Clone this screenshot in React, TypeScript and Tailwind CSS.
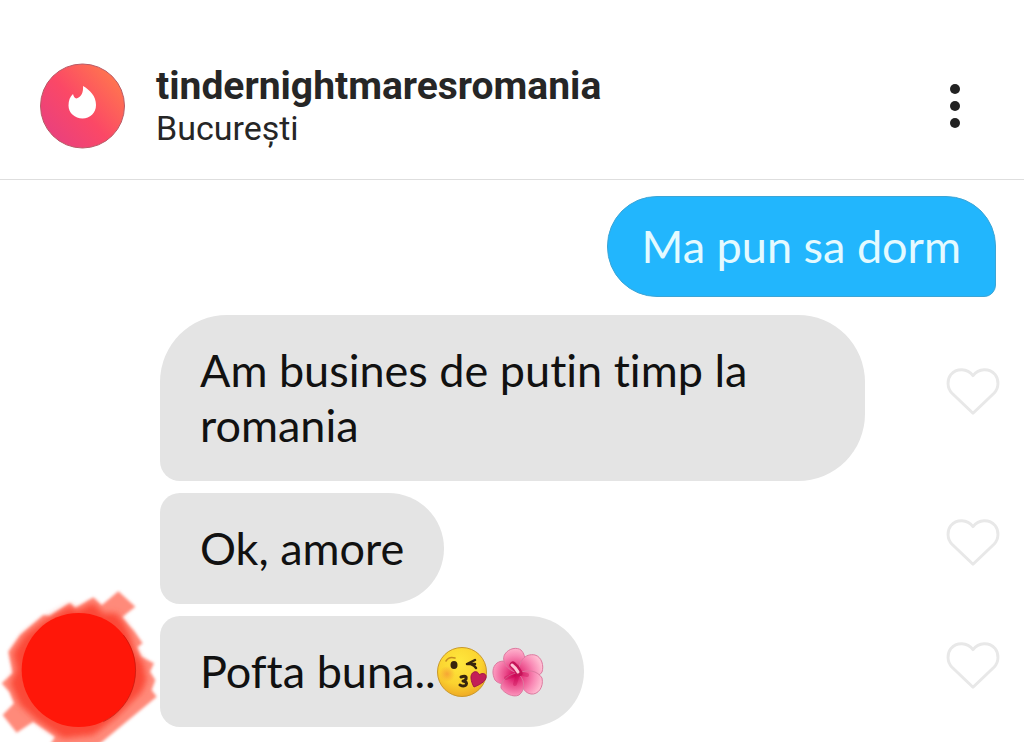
import type { ReactNode } from "react"

const messages = [
  { id: 1, text: "Am busines de putin timp la romania", shape: "rounded-[67px] rounded-bl-[20px] pl-10 pr-20 py-7" },
  { id: 2, text: "Ok, amore", shape: "rounded-l-[20px] rounded-r-[56px] px-10 py-7" },
  { id: 3, text: "Pofta buna..", shape: "rounded-l-[20px] rounded-r-[56px] px-10 py-7", emojis: true },
]

function TinderLogo() {
  return (
    <svg viewBox="0 0 86 86" className="size-[86px] shrink-0" aria-hidden="true">
      <defs>
        <linearGradient id="logo" x1="0.1" y1="0.9" x2="0.9" y2="0.2">
          <stop offset="0" stopColor="#e8407f" />
          <stop offset="0.5" stopColor="#fb4866" />
          <stop offset="1" stopColor="#ff7350" />
        </linearGradient>
      </defs>
      <circle cx="42.500" cy="43" r="42" fill="url(#logo)" stroke="#b85a66" strokeWidth="1" />
      <path
        d="M43 23C50 27 56 33 56 42C56 50 50 55.500 42.500 55.500C35 55.500 28.500 50 28.500 42.500C28.500 37.500 30 33.500 33 31C33.500 33 34.500 35.500 36.500 35.500C41.500 34 43.500 29 43 23Z"
        fill="#fff"
      />
    </svg>
  )
}

function HeartIcon() {
  return (
    <svg viewBox="0 0 56 50" className="h-[50px] w-[54px]" fill="none" stroke="#e8e8e8" strokeWidth="3" strokeLinejoin="round" aria-hidden="true">
      <path d="M28 47L6 26C1 21 1 12 5 7C11 0 22 0 28 8C34 0 45 0 51 7C55 12 55 21 50 26Z" />
    </svg>
  )
}

function KissEmoji() {
  return (
    <svg viewBox="0 0 52 52" className="size-[52px]" role="img" aria-label="face blowing a kiss">
      <defs>
        <radialGradient id="face" cx="0.45" cy="0.3" r="0.75">
          <stop offset="0" stopColor="#ffe83d" />
          <stop offset="0.6" stopColor="#fbd22f" />
          <stop offset="1" stopColor="#eda323" />
        </radialGradient>
        <radialGradient id="blush">
          <stop offset="0" stopColor="#f59a35" stopOpacity="0.8" />
          <stop offset="1" stopColor="#f59a35" stopOpacity="0" />
        </radialGradient>
      </defs>
      <circle cx="26" cy="26" r="24.500" fill="url(#face)" stroke="#c9982a" strokeWidth="1" />
      <circle cx="11" cy="28" r="8" fill="url(#blush)" />
      <path d="M10 15Q13 10 19 12" fill="none" stroke="#c58b20" strokeWidth="1.500" strokeLinecap="round" />
      <ellipse cx="18" cy="19" rx="3.500" ry="4" fill="#38250d" />
      <path d="M39 14L31 18Q36 17 40 22M31 18H39" fill="none" stroke="#38250d" strokeWidth="2.500" strokeLinecap="round" strokeLinejoin="round" />
      <path d="M25 31Q31 29 30 33Q29 35 27 35Q32 36 30 39Q28 41 24 39" fill="none" stroke="#38250d" strokeWidth="3" strokeLinecap="round" strokeLinejoin="round" />
      <path d="M38 41C35 36 33 28 38 26C41 25 43 27 43 29C47 26 51 28 50 32C49 36 43 39 38 41Z" fill="#c41f57" stroke="#a01747" strokeWidth="1" />
    </svg>
  )
}

function FlowerEmoji() {
  return (
    <svg viewBox="0 0 52 52" className="size-[52px]" role="img" aria-label="hibiscus">
      <defs>
        <radialGradient id="petal" gradientUnits="userSpaceOnUse" cx="23" cy="29" r="28">
          <stop offset="0" stopColor="#d30058" />
          <stop offset="0.35" stopColor="#ea4b8a" />
          <stop offset="0.7" stopColor="#f98bb6" />
          <stop offset="1" stopColor="#ffbdd2" />
        </radialGradient>
      </defs>
      <g fill="url(#petal)" stroke="#dd7aa0" strokeWidth="1">
        <path d="M25 29C18 39 8 40 3 34C0 28 0 21 5 17C13 12 23 17 25 29Z" />
        <path d="M26 27C14 24 9 14 13 8C17 2 25 1 29 4C35 10 34 21 26 27Z" />
        <path d="M27 28C26 15 33 7 43 9C50 11 52 20 50 26C46 33 34 33 27 28Z" />
        <path d="M26 28C35 22 46 25 50 32C52 41 46 49 39 48C31 47 28 37 26 28Z" />
        <path d="M25 27C33 32 34 44 27 49C21 52 12 47 9 42C8 35 17 28 25 27Z" />
      </g>
      <path d="M25 28L14 32M26 28L23 38M26 27L35 29" stroke="#c70851" strokeWidth="4" strokeLinecap="round" opacity="0.35" />
      <path d="M27 27Q25 22 21 19" fill="none" stroke="#c51458" strokeWidth="7" strokeLinecap="round" />
      <path d="M26 26Q24 22 20 19" fill="none" stroke="#ffc4d6" strokeWidth="3" strokeLinecap="round" />
    </svg>
  )
}

function ScribbledAvatar() {
  return (
    <svg viewBox="0 27 480 462" className="h-[154px] w-40" aria-hidden="true">
      <defs>
        <filter id="soft" x="-10%" y="-10%" width="120%" height="120%">
          <feGaussianBlur stdDeviation="5" />
        </filter>
        <filter id="softer" x="-10%" y="-10%" width="120%" height="120%">
          <feGaussianBlur stdDeviation="9" />
        </filter>
        <clipPath id="edge">
          <rect y="27" width="480" height="459" />
        </clipPath>
      </defs>
      <g clipPath="url(#edge)">
        <path
          d="M355 34L406 80L366 112L392 142L402 152L428 190L412 202L424 230L462 250L450 275L466 300L455 330L470 350L295 495H150L165 470L100 425L50 458L8 405L42 370L28 335L5 310L38 280L25 215L60 165L130 105L150 108L210 68L225 85L280 52L305 76Z"
          fill="#ff8a7a"
          filter="url(#soft)"
        />
        <path
          d="M280 68L310 100H350L372 130L390 165L405 215L430 250L440 300L425 335L385 375L345 415L280 465L190 475L110 420L60 375L30 310L50 270L38 220L75 165L135 120L210 78L230 92Z"
          fill="#fb4a37"
          filter="url(#softer)"
        />
        <circle cx="236" cy="270" r="171" fill="#ff1709" />
        <path d="M370 165A171 171 0 0 1 310 425" fill="none" stroke="#b9160b" strokeWidth="3" opacity="0.6" />
      </g>
    </svg>
  )
}

function Bubble({ className, children }: { className: string; children: ReactNode }) {
  return (
    <p className={`font-['Lato',sans-serif] text-[45px] leading-[55px] [font-variant-ligatures:none] ${className}`}>{children}</p>
  )
}

export default function App() {
  return (
    <div className="min-h-screen bg-white font-['Roboto',sans-serif] text-[#262626]">
      <header className="flex items-center border-b border-[#dedede] pl-10 pr-12 pt-[63px] pb-[30px]">
        <TinderLogo />
        <div className="ml-[30px] flex-1">
          <h1 className="text-[39px] leading-[44px] font-bold">tindernightmaresromania</h1>
          <p className="text-[34px] leading-10">București</p>
        </div>
        <button type="button" aria-label="More options" className="px-4">
          <svg viewBox="0 0 10 44" className="h-11 w-[10px]" fill="#222" aria-hidden="true">
            <circle cx="5" cy="5" r="5" />
            <circle cx="5" cy="22" r="5" />
            <circle cx="5" cy="39" r="5" />
          </svg>
        </button>
      </header>

      <main className="pt-4">
        <div className="flex justify-end pr-7">
          <Bubble className="rounded-[50px] rounded-br-xl border border-[#3ca5d6] bg-[#22b6fd] px-[34px] py-[22px] text-[#e4faff]">
            Ma pun sa dorm
          </Bubble>
        </div>

        <div className="mt-[18px] flex items-end">
          <ScribbledAvatar />
          <div className="flex flex-1 flex-col gap-3 pr-6 pb-4">
            {messages.map((message) => (
              <div key={message.id} className="flex items-center justify-between">
                <Bubble className={`flex max-w-[705px] items-center bg-[#e4e4e4] text-[#111] ${message.shape}`}>
                  {message.text}
                  {message.emojis && (
                    <span className="flex gap-1">
                      <KissEmoji />
                      <FlowerEmoji />
                    </span>
                  )}
                </Bubble>
                <button type="button" aria-label="Like message" className="mb-3 shrink-0">
                  <HeartIcon />
                </button>
              </div>
            ))}
          </div>
        </div>
      </main>
    </div>
  )
}
